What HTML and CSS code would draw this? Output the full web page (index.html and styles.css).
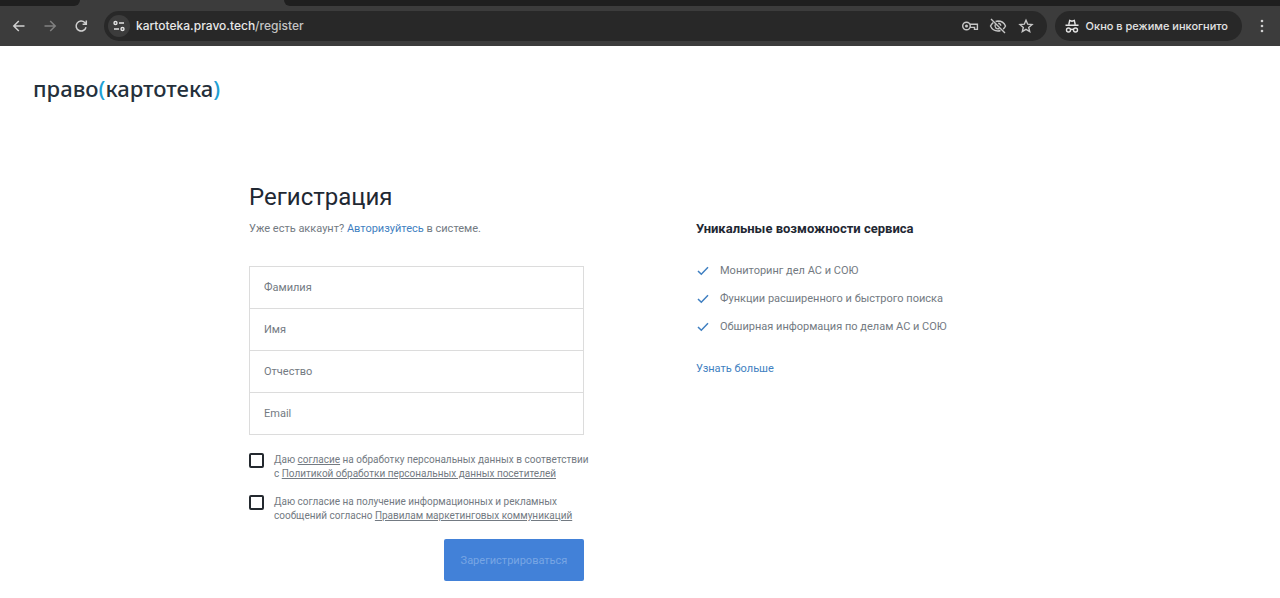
FILE: index.html
```
<!DOCTYPE html>
<html lang="ru">
<head>
    <meta charset="UTF-8">
    <meta name="viewport" content="width=device-width, initial-scale=1.0">
    <title>Регистрация - право(картотека)</title>
    <link rel="stylesheet" href="styles.css">
</head>
<body>
    <!-- Browser window -->
    <div class="tab-strip">
        <div class="tab-before"></div>
        <div class="tab-active"></div>
        <div class="tab-after"></div>
    </div>
    <div class="toolbar">
        <button type="button" class="nav-button" aria-label="Назад">
            <svg viewBox="0 0 16 16"><path d="M13.5 8H3M7.8 3L2.8 8l5 5"/></svg>
        </button>
        <button type="button" class="nav-button nav-disabled" aria-label="Вперёд">
            <svg viewBox="0 0 16 16"><path d="M2.500 8H13M8.200 3l5 5-5 5"/></svg>
        </button>
        <button type="button" class="nav-button" aria-label="Обновить">
            <svg viewBox="0 0 16 16"><path d="M13 9.200A5 5 0 1 1 11.800 4.600L13 5.800M13.300 2.500V6.200H9.600"/></svg>
        </button>
        <div class="address-bar">
            <button type="button" class="site-info" aria-label="Сведения о сайте">
                <svg viewBox="0 0 14 14"><circle cx="3.500" cy="4" r="1.500"/><path d="M7 4h5M2 10h5"/><circle cx="10.500" cy="10" r="1.500"/></svg>
            </button>
            <div class="url">kartoteka.pravo.tech<span>/register</span></div>
            <button type="button" class="bar-icon" aria-label="Пароли">
                <svg viewBox="0 0 18 18"><circle cx="5.500" cy="9" r="3.800"/><circle class="dot" cx="5.500" cy="9" r="1.500"/><path d="M9 7.200h7.400v5.200h-2.900v-2H9"/></svg>
            </button>
            <button type="button" class="bar-icon" aria-label="Файлы cookie">
                <svg viewBox="0 0 18 18"><path d="M2 2l14 14M6.600 4.500A7.500 7.500 0 0 1 9 4c3.500 0 6.200 2 7.500 5a8.500 8.500 0 0 1-2.300 3.100M11.500 13.500A7.700 7.700 0 0 1 9 14c-3.500 0-6.200-2-7.500-5a8.500 8.500 0 0 1 2.700-3.400M6.300 7.500a3 3 0 0 0 4 4M9.200 6.200a2.800 2.800 0 0 1 2.600 2.600"/></svg>
            </button>
            <button type="button" class="bar-icon" aria-label="Добавить в закладки">
                <svg viewBox="0 0 18 18"><path d="M9 3.200l1.700 4 4.300.4-3.300 2.800 1 4.200L9 12.400l-3.700 2.200 1-4.200L3 7.600l4.300-.4z"/></svg>
            </button>
        </div>
        <div class="incognito">
            <svg viewBox="0 0 16 16"><path d="M4.800 6.500l.9-4 2.300.7 2.300-.7.900 4M1.500 7.300h13M6.500 11.700q1.500-1 3 0"/><circle cx="4.500" cy="12" r="2"/><circle cx="11.500" cy="12" r="2"/></svg>
            <span>Окно в режиме инкогнито</span>
        </div>
        <button type="button" class="nav-button menu-button" aria-label="Меню">
            <svg viewBox="0 0 16 16"><circle cx="8" cy="3" r="1.300"/><circle cx="8" cy="8" r="1.300"/><circle cx="8" cy="13" r="1.300"/></svg>
        </button>
    </div>

    <header class="header">
        <a href="#" class="logo">право<span>(</span>картотека<span>)</span></a>
    </header>

    <main class="content">
        <section class="registration">
            <h1>Регистрация</h1>
            <p class="login-hint">Уже есть аккаунт? <a href="#">Авторизуйтесь</a> в системе.</p>
            <form id="registration-form">
                <div class="fields">
                    <input type="text" name="last-name" placeholder="Фамилия" aria-label="Фамилия">
                    <input type="text" name="first-name" placeholder="Имя" aria-label="Имя">
                    <input type="text" name="middle-name" placeholder="Отчество" aria-label="Отчество">
                    <input type="email" name="email" placeholder="Email" aria-label="Email">
                </div>
                <div class="agreement">
                    <input type="checkbox" id="personal-data">
                    <label for="personal-data">Даю <a href="#">согласие</a> на обработку персональных данных в соответствии<br>с <a href="#">Политикой обработки персональных данных посетителей</a></label>
                </div>
                <div class="agreement">
                    <input type="checkbox" id="marketing">
                    <label for="marketing">Даю согласие на получение информационных и рекламных<br>сообщений согласно <a href="#">Правилам маркетинговых коммуникаций</a></label>
                </div>
                <button type="submit" class="submit-button" disabled>Зарегистрироваться</button>
            </form>
        </section>

        <section class="features">
            <h2>Уникальные возможности сервиса</h2>
            <ul>
                <li><svg viewBox="0 0 14 14"><path d="M2 7l3.300 3.300L12 3.300"/></svg>Мониторинг дел АС и СОЮ</li>
                <li><svg viewBox="0 0 14 14"><path d="M2 7l3.300 3.300L12 3.300"/></svg>Функции расширенного и быстрого поиска</li>
                <li><svg viewBox="0 0 14 14"><path d="M2 7l3.300 3.300L12 3.300"/></svg>Обширная информация по делам АС и СОЮ</li>
            </ul>
            <a href="#">Узнать больше</a>
        </section>
    </main>
</body>
</html>
```
FILE: styles.css
```
* {
    box-sizing: border-box;
}

body {
    margin: 0;
    font-family: Roboto, Arial, sans-serif;
    font-size: 11px;
    line-height: 16px;
    color: #737a82;
    background-color: #fff;
}

a {
    color: #3f7fc1;
    text-decoration: none;
}

button {
    padding: 0;
    border: none;
    background: none;
    font-family: inherit;
}

svg {
    display: block;
    flex-shrink: 0;
    fill: none;
    stroke: currentColor;
}

/* Browser window */
.tab-strip {
    display: flex;
    height: 6px;
    background-color: #3c3c3c;
}

.tab-before {
    width: 80px;
    background-color: #1f1f1f;
    border-bottom-right-radius: 6px;
}

.tab-active {
    width: 204px;
}

.tab-after {
    flex: 1;
    background-color: #1f1f1f;
    border-bottom-left-radius: 6px;
}

.toolbar {
    display: flex;
    align-items: center;
    height: 40px;
    padding: 0 8px 0 11px;
    background-color: #3c3c3c;
    color: #dcdcdc;
    font-family: Inter, Arial, sans-serif;
}

.nav-button {
    width: 16px;
    margin-right: 15px;
    color: #d0d0d0;
}

.nav-button svg {
    width: 16px;
    height: 16px;
    stroke-width: 1.5;
}

.nav-disabled {
    color: #818181;
}

.address-bar {
    display: flex;
    flex: 1;
    align-items: center;
    height: 30px;
    padding: 0 12px 0 4px;
    border-radius: 15px;
    background-color: #282828;
}

.site-info {
    display: flex;
    align-items: center;
    justify-content: center;
    width: 22px;
    height: 22px;
    border-radius: 50%;
    background-color: #3c3c3c;
    color: #e3e3e3;
}

.site-info svg {
    width: 14px;
    height: 14px;
    stroke-width: 1.4;
}

.url {
    flex: 1;
    margin-left: 6px;
    font-size: 12px;
    font-weight: 500;
    color: #e8e8e8;
}

.url span {
    color: #c4c4c4;
}

.bar-icon {
    margin-left: 10px;
    color: #c7c7c7;
}

.bar-icon svg {
    width: 18px;
    height: 18px;
    stroke-width: 1.4;
}

.bar-icon .dot {
    fill: currentColor;
    stroke: none;
}

.incognito {
    display: flex;
    align-items: center;
    gap: 6px;
    height: 30px;
    margin: 0 12px 0 8px;
    padding: 0 14px 0 9px;
    border-radius: 15px;
    background-color: #282828;
    color: #e3e3e3;
    font-size: 11px;
    font-weight: 500;
}

.incognito svg {
    width: 16px;
    height: 16px;
    stroke-width: 1.4;
}

.menu-button {
    margin-right: 2px;
}

.menu-button svg {
    fill: currentColor;
    stroke: none;
}

/* Header */
.header {
    padding: 27px 33px 0;
}

.logo {
    display: inline-block;
    font-family: "Noto Sans", "Open Sans", sans-serif;
    font-size: 22px;
    font-weight: 500;
    line-height: 30px;
    color: #24303b;
}

.logo span {
    color: #209fd4;
}

/* Content */
.content {
    display: grid;
    grid-template-columns: minmax(0, 1fr) minmax(0, 1fr);
    column-gap: 112px;
    max-width: 782px;
    margin: 0 auto;
    padding: 77px 0 16px;
}

h1 {
    margin: 0;
    font-size: 24px;
    font-weight: 400;
    line-height: 34px;
    color: #1f2833;
}

.login-hint {
    margin: 7px 0 29px;
}

.fields {
    margin-bottom: 18px;
    border: 1px solid #dcdcdc;
}

.fields input {
    display: block;
    width: 100%;
    height: 42px;
    padding: 0 14px;
    border: none;
    border-bottom: 1px solid #dcdcdc;
    font-family: inherit;
    font-size: 11px;
    outline: none;
}

.fields input:last-child {
    height: 41px;
    border-bottom: none;
}

.fields input::placeholder {
    color: #737a82;
}

/* Agreements */
.agreement {
    display: flex;
    gap: 10px;
    margin-bottom: 14px;
    font-size: 10px;
    line-height: 14px;
    white-space: nowrap;
}

.agreement input {
    flex-shrink: 0;
    width: 15px;
    height: 15px;
    margin: 0;
    border: 2px solid #24292f;
    border-radius: 2px;
    appearance: none;
}

.agreement input:checked {
    background-color: #4281d8;
}

.agreement a {
    color: inherit;
    text-decoration: underline;
}

.submit-button {
    display: block;
    width: 140px;
    height: 42px;
    margin: 16px 0 0 auto;
    border-radius: 2px;
    background-color: #4281d8;
    color: #78a6e4;
    font-size: 11px;
}

/* Features */
.features {
    padding-top: 41px;
}

.features h2 {
    margin: 0 0 26px;
    font-size: 13px;
    font-weight: 700;
    line-height: 16px;
    color: #1f2833;
}

.features ul {
    margin: 0 0 26px;
    padding: 0;
    list-style: none;
}

.features li {
    display: flex;
    align-items: center;
    gap: 10px;
    margin-bottom: 12px;
}

.features svg {
    width: 14px;
    height: 14px;
    color: #3f7fc1;
    stroke-width: 1.5;
}
```
